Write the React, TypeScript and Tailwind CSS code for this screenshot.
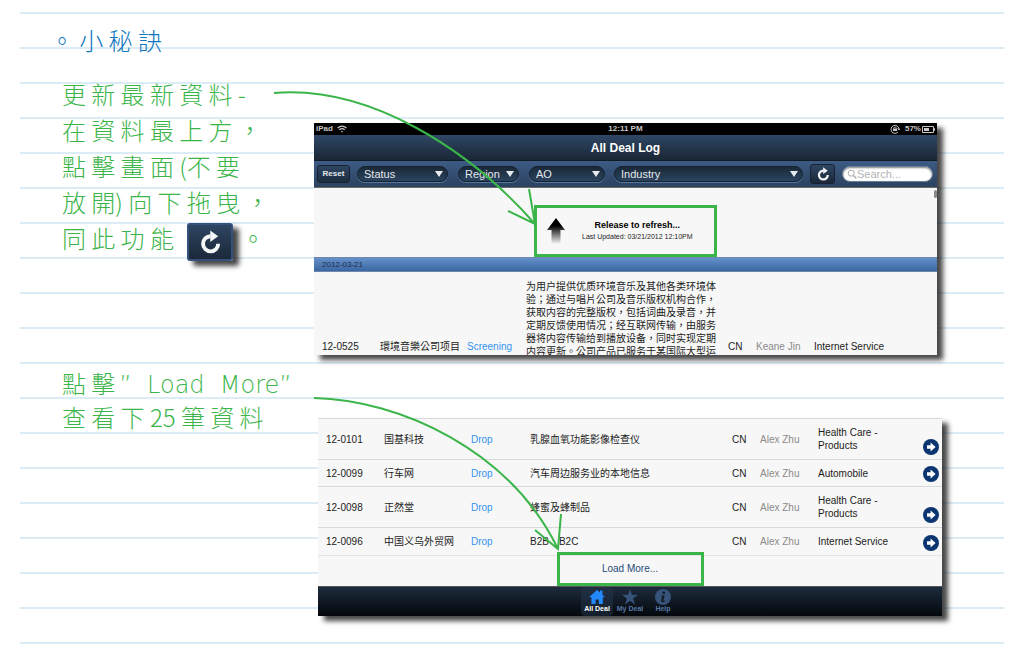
import React from "react";

const columns = ["w-[66px]", "w-[87px]", "w-[59px]", "w-[202px]", "w-[28px]", "w-[58px]", "w-[80px]", "w-auto"];

const intro =
  "为用户提供优质环境音乐及其他各类环境体验；通过与唱片公司及音乐版权机构合作，获取内容的完整版权，包括词曲及录音，并定期反馈使用情况；经互联网传输，由服务器将内容传输给到播放设备，同时实现定期内容更新。公司产品已服务于某国际大型运";

const deals = [
  { id: "12-0101", name: "国基科技", about: "乳腺血氧功能影像检查仪", industry: "Health Care - Products", row: "h-[41px]" },
  { id: "12-0099", name: "行车网", about: "汽车周边服务业的本地信息", industry: "Automobile", row: "h-[27px]" },
  { id: "12-0098", name: "正然堂", about: "蜂蜜及蜂制品", industry: "Health Care - Products", row: "h-[41px]" },
  { id: "12-0096", name: "中国义乌外贸网", about: "B2B、B2C", industry: "Internet Service", row: "h-[27px]" },
];

function Columns() {
  return (
    <colgroup>
      {columns.map((width) => (
        <col key={width} className={width} />
      ))}
    </colgroup>
  );
}

function RefreshIcon({ className }: { className: string }) {
  return (
    <svg viewBox="0 0 20 20" className={className} fill="none" aria-hidden="true">
      <path d="M10.5 5.2A6.3 6.3 0 1 0 16.8 11.4" stroke="#f5f6f8" strokeWidth="3.2" />
      <path d="M10.2 0.4L16.8 5.2L10.2 10Z" fill="#f5f6f8" />
    </svg>
  );
}

function Filter({ label, className }: { label: string; className: string }) {
  return (
    <div className={`relative ${className}`}>
      <select
        aria-label={label}
        className="block h-4 w-full appearance-none rounded-full border border-[#14202e] bg-linear-to-b from-[#1a2938] to-[#2b4460] pr-4 pl-1.5 text-[11px] leading-3 text-[#e4e8ec] shadow-[0_1px_0_#5877a0]"
      >
        <option>{label}</option>
      </select>
      <svg viewBox="0 0 8 6" className="pointer-events-none absolute top-[5px] right-[5px] h-1.5 w-2" aria-hidden="true">
        <path d="M0 0H8L4 6Z" fill="#e8ebee" />
      </svg>
    </div>
  );
}

function ArrowButton() {
  return (
    <button aria-label="Open deal" className="block size-4">
      <svg viewBox="0 0 16 16" className="size-4">
        <circle cx="8" cy="8" r="8" fill="#0a3570" />
        <path d="M4 6.2H7.6V3.6L12.6 8L7.6 12.4V9.8H4Z" fill="#fff" />
      </svg>
    </button>
  );
}

function LogPanel() {
  return (
    <div className="mt-[47px] mr-[67px] flex-1 bg-[#f7f7f7] shadow-[6px_5px_5px_#000000b8]">
      <div className="grid h-3 grid-cols-3 items-center bg-black px-0.5 text-[8px] leading-3 font-bold text-[#c8c8c8]">
        <span className="flex items-center gap-1">
          iPad
          <svg viewBox="0 0 10 8" className="h-2 w-2.5" fill="none" stroke="#c8c8c8" strokeWidth="1.3" aria-hidden="true">
            <path d="M0.6 3Q5 -0.8 9.4 3M2.3 4.8Q5 2.6 7.7 4.8" />
            <circle cx="5" cy="6.6" r="0.8" fill="#c8c8c8" stroke="none" />
          </svg>
        </span>
        <span className="text-center">12:11 PM</span>
        <span className="flex items-center justify-end gap-px">
          <svg viewBox="0 0 10 10" className="mr-1 size-2.5" fill="none" stroke="#c8c8c8" aria-hidden="true">
            <path d="M8 8A4 4 0 1 1 9 5M7.5 4.5L9 6L10 4.5" />
            <path d="M3 4.6H7V7H3Z" fill="#c8c8c8" stroke="none" />
            <path d="M3.8 4.8V3.6Q5 2.2 6.2 3.6V4.8" strokeWidth="0.8" />
          </svg>
          57%
          <svg viewBox="0 0 13 7" className="h-[7px] w-[13px]" fill="none" aria-hidden="true">
            <path d="M0.5 0.5H11.5V6.5H0.5Z" stroke="#c8c8c8" />
            <path d="M2 2H7V5H2ZM12 2.3H13V4.7H12Z" fill="#c8c8c8" />
          </svg>
        </span>
      </div>
      <h2 className="h-[26px] border-b border-[#111b26] bg-linear-to-b from-[#2f4766] to-[#1a2735] text-center text-xs leading-[26px] font-bold text-white">
        All Deal Log
      </h2>
      <div className="flex h-[27px] items-center border-b border-[#6b6b6b] bg-linear-to-b from-[#3d5b85] to-[#2b425f] pr-1 pl-[3px]">
        <button className="mr-[7px] h-[18px] w-[33px] rounded-[3px] border border-[#162333] bg-linear-to-b from-[#2e4562] to-[#1e2d3f] text-[8px] leading-4 font-bold text-[#e4e8ec]">
          Reset
        </button>
        <Filter label="Status" className="mr-2.5 w-[91px]" />
        <Filter label="Region" className="mr-2.5 w-[61px]" />
        <Filter label="AO" className="mr-[9px] w-[76px]" />
        <Filter label="Industry" className="mr-[7px] flex-1" />
        <button
          aria-label="Refresh"
          className="mr-[7px] flex h-5 w-[25px] items-center justify-center rounded-[3px] border border-[#162333] bg-linear-to-b from-[#2e4562] to-[#1b2939]"
        >
          <RefreshIcon className="size-3.5" />
        </button>
        <label className="flex h-4 w-[91px] items-center rounded-full border border-[#6c7f98] bg-white pl-1 shadow-[inset_0_1px_2px_#00000080]">
          <svg viewBox="0 0 10 10" className="size-2.5 shrink-0" fill="none" stroke="#aaa" aria-hidden="true">
            <circle cx="4.2" cy="4.2" r="3" />
            <path d="M6.5 6.5L9.4 9.4" strokeWidth="1.4" />
          </svg>
          <input
            aria-label="Search"
            placeholder="Search..."
            className="w-full min-w-0 bg-transparent text-[11px] leading-3 outline-none placeholder:text-[#b3b3b3]"
          />
        </label>
      </div>
      <div className="relative flex h-[69px] items-end justify-center">
        <div className="absolute top-0.5 right-0 h-2 w-[3px] rounded-full bg-[#8a8a8a]" />
        <div className="flex h-[52px] w-[183px] items-center border-3 border-[#3bb54a] pl-2.5">
          <svg viewBox="0 0 18 26" className="mr-[17px] h-[26px] w-[18px]" aria-hidden="true">
            <defs>
              <linearGradient id="pull" x1="0" y1="0" x2="0" y2="1">
                <stop offset="0.3" stopColor="#000" />
                <stop offset="1" stopColor="#000" stopOpacity="0" />
              </linearGradient>
            </defs>
            <path d="M9 0L18 12H13.5V26H4.5V12H0Z" fill="url(#pull)" />
          </svg>
          <div className="text-center whitespace-nowrap">
            <p className="text-[9px] leading-3 font-bold text-black">Release to refresh...</p>
            <p className="text-[7px] leading-3 text-[#222]">Last Updated: 03/21/2012 12:10PM</p>
          </div>
        </div>
      </div>
      <h3 className="h-[15px] border-y border-[#6f87a8] bg-linear-to-b from-[#6590c9] to-[#3a67a3] pl-2 text-[8px] leading-[13px] text-[#1f2f48]">
        2012-03-21
      </h3>
      <div className="h-[83px] overflow-hidden">
        <table className="w-full table-fixed text-left text-[10px] leading-[13px] text-[#1c1c1c]">
          <Columns />
          <tbody>
            <tr className="h-[148px]">
              <td className="pl-2">12-0525</td>
              <td className="whitespace-nowrap">環境音樂公司项目</td>
              <td className="text-[#3393f0]">Screening</td>
              <td className="pt-2 pr-1 align-top">{intro}</td>
              <td>CN</td>
              <td className="text-[#8b8b8b]">Keane Jin</td>
              <td className="whitespace-nowrap">Internet Service</td>
              <td />
            </tr>
          </tbody>
        </table>
      </div>
    </div>
  );
}

function ListPanel() {
  return (
    <div className="mt-[53px] mr-[62px] flex-1 bg-[#f7f7f7] shadow-[6px_5px_5px_#000000b8]">
      <table className="w-full table-fixed text-left text-[10px] leading-[13px] text-[#1c1c1c]">
        <Columns />
        <tbody>
          {deals.map((deal) => (
            <tr key={deal.id} className={`border-t border-[#d9d9d9] ${deal.row}`}>
              <td className="pl-2">{deal.id}</td>
              <td className="whitespace-nowrap">{deal.name}</td>
              <td className="text-[#3393f0]">Drop</td>
              <td>{deal.about}</td>
              <td>CN</td>
              <td className="text-[#8b8b8b]">Alex Zhu</td>
              <td>{deal.industry}</td>
              <td className="pb-1 align-bottom">
                <div className="flex justify-end pr-[3px]">
                  <ArrowButton />
                </div>
              </td>
            </tr>
          ))}
        </tbody>
      </table>
      <div className="flex h-[31px] items-end justify-center border-t border-[#e4e4e4]">
        <button className="h-[34px] w-[147px] border-3 border-[#3bb54a] text-[10px] leading-3 text-[#274b7a]">
          Load More...
        </button>
      </div>
      <nav className="flex h-[30px] justify-center gap-px border-t border-[#555] bg-linear-to-b from-[#1e2c3e] to-[#05080d] text-[7px] leading-2 font-bold text-[#5678a4]">
        <a href="#all" className="flex w-8 flex-col items-center rounded-sm bg-[#24364c80] pt-0.5 whitespace-nowrap text-white">
          <svg viewBox="0 0 16 16" className="size-4" aria-hidden="true">
            <path d="M8 1L11 3.6V1.4H13.4V5.8L16 8.2H13.8V15H9.8V10.4H6.6V15H2.4V8.2H0Z" fill="#2389ff" />
          </svg>
          All Deal
        </a>
        <a href="#mine" className="flex w-8 flex-col items-center pt-0.5 whitespace-nowrap">
          <svg viewBox="0 0 16 16" className="size-4" aria-hidden="true">
            <path d="M8 0L9.9 5.8H16L11.1 9.4L13 15.4L8 11.7L3 15.4L4.9 9.4L0 5.8H6.1Z" fill="#37537a" />
          </svg>
          My Deal
        </a>
        <a href="#help" className="flex w-8 flex-col items-center pt-0.5 whitespace-nowrap">
          <svg viewBox="0 0 16 16" className="size-4" aria-hidden="true">
            <circle cx="8" cy="8" r="8" fill="#37537a" />
            <circle cx="8.8" cy="3.8" r="1.4" fill="#121c29" />
            <path d="M6 6.4H9.6L8.4 11.8L9.8 11.6V12.6Q6 14 6.2 11.8L7 7.6L6 7.4Z" fill="#121c29" />
          </svg>
          Help
        </a>
      </nav>
    </div>
  );
}

export default function App() {
  return (
    <main className="relative min-h-screen overflow-hidden bg-white px-5 font-['Liberation_Sans','Noto_Sans_CJK_TC',sans-serif]">
      <div className="min-h-screen bg-[linear-gradient(#dcecf6_2px,transparent_2px)] bg-[length:100%_35px] bg-[position:0_12px]">
        <h1 className="h-[76px] pt-[22px] pl-[30px] font-['Noto_Sans_CJK_TC',sans-serif] text-2xl leading-9 font-light text-[#0e76bc]">。 小 秘 訣</h1>
        <section className="flex">
          <div className="w-[294px] shrink-0 pl-[42px] font-['Noto_Sans_CJK_TC',sans-serif] text-2xl leading-9 font-light whitespace-nowrap text-[#3bb54a]">
            <p>更 新 最 新 資 料 -</p>
            <p>在 資 料 最 上 方 ，</p>
            <p>點 擊 畫 面 (不 要</p>
            <p>放 開) 向 下 拖 曳 ，</p>
            <p className="flex h-9">
              同 此 功 能
              <button
                aria-label="Refresh"
                className="mt-[3px] ml-[13px] flex h-[38px] w-[46px] items-center justify-center rounded-[3px] border-2 border-[#35507a] bg-linear-to-b from-[#2e4562] to-[#1b2939] shadow-[6px_5px_5px_#000000b8]"
              >
                <RefreshIcon className="size-6" />
              </button>
              <span className="ml-2">。</span>
            </p>
          </div>
          <LogPanel />
        </section>
        <section className="flex pt-2.5">
          <div className="w-[298px] shrink-0 pl-[42px] font-['Noto_Sans_CJK_TC',sans-serif] text-2xl leading-9 font-light whitespace-nowrap text-[#3bb54a]">
            <p className="flex h-[34px] items-baseline">
              點 擊
              <span className="ml-1 font-['DejaVu_Sans','Inter',sans-serif] font-extralight whitespace-pre">”  Load  More”</span>
            </p>
            <p>查 看 下 25 筆 資 料</p>
          </div>
          <ListPanel />
        </section>
      </div>
      <svg viewBox="0 0 1024 660" className="pointer-events-none absolute top-0 left-0 h-[660px] w-[1024px]" fill="none" stroke="#3bb54a" strokeWidth="2" aria-hidden="true">
        <path d="M274 93C370 85 470 150 535 224M508 211L535 224L529 189" />
        <path d="M314 398C400 400 510 450 558 549M535 530L558 549L561 514" />
      </svg>
    </main>
  );
}
